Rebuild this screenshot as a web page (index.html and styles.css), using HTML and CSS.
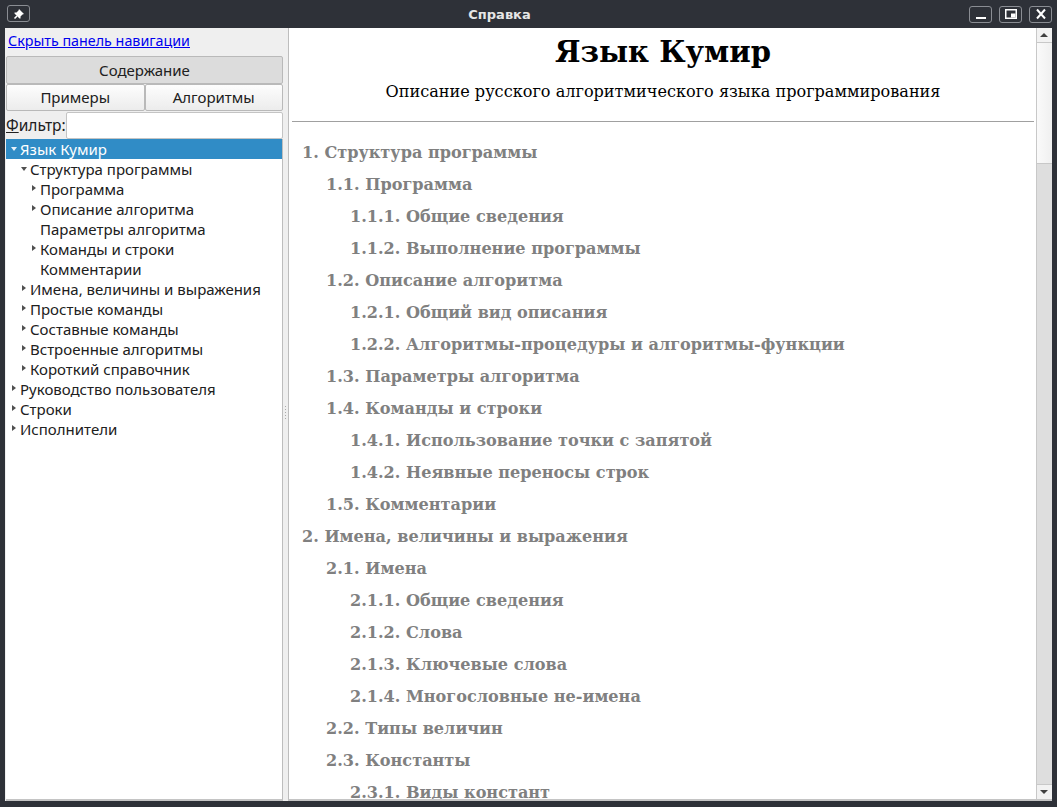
FILE: index.html
```html
<!DOCTYPE html>
<html lang="ru">
<head>
<meta charset="utf-8">
<title>Справка</title>
<link rel="stylesheet" href="styles.css">
</head>
<body>
<div class="window">
  <div class="titlebar">
    <div class="tb-btn pin">
      <svg width="12" height="12" viewBox="0 0 12 12"><path d="M6 1 L11 6 L9.5 6.5 L7.5 8.5 L7.5 10.5 L6.5 10.5 L1.5 5.5 L1.5 4.5 L3.5 4.5 L5.5 2.5 Z" fill="#fff"/><path d="M4 8 L1.5 10.5" stroke="#fff" stroke-width="1.6"/></svg>
    </div>
    <div class="title">Справка</div>
    <div class="tb-right">
      <div class="tb-btn"><svg width="14" height="12" viewBox="0 0 14 12"><rect x="2" y="9" width="10" height="2" fill="#fff"/></svg></div>
      <div class="tb-btn"><svg width="14" height="12" viewBox="0 0 14 12"><rect x="1.75" y="1.75" width="10.5" height="8.5" fill="none" stroke="#fff" stroke-width="1.5"/><rect x="7" y="5.5" width="4.5" height="4" fill="#fff"/></svg></div>
      <div class="tb-btn"><svg width="14" height="12" viewBox="0 0 14 12"><path d="M3 1.5 L11 10.5 M11 1.5 L3 10.5" stroke="#fff" stroke-width="2"/></svg></div>
    </div>
  </div>
  <div class="main">
    <div class="nav">
      <div class="link-row"><a class="hide-link" href="#">Скрыть панель навигации</a></div>
      <div class="btn checked">Содержание</div>
      <div class="btn-row"><div class="btn">Примеры</div><div class="btn">Алгоритмы</div></div>
      <div class="filter"><span class="flabel"><u>Ф</u>ильтр:</span><div class="finput"></div></div>
      <div class="tree">
        <div class="row sel l0"><span class="arr down"></span>Язык Кумир</div>
        <div class="row l1"><span class="arr down"></span>Структура программы</div>
        <div class="row l2"><span class="arr right"></span>Программа</div>
        <div class="row l2"><span class="arr right"></span>Описание алгоритма</div>
        <div class="row l2"><span class="arr none"></span>Параметры алгоритма</div>
        <div class="row l2"><span class="arr right"></span>Команды и строки</div>
        <div class="row l2"><span class="arr none"></span>Комментарии</div>
        <div class="row l1"><span class="arr right"></span>Имена, величины и выражения</div>
        <div class="row l1"><span class="arr right"></span>Простые команды</div>
        <div class="row l1"><span class="arr right"></span>Составные команды</div>
        <div class="row l1"><span class="arr right"></span>Встроенные алгоритмы</div>
        <div class="row l1"><span class="arr right"></span>Короткий справочник</div>
        <div class="row l0"><span class="arr right"></span>Руководство пользователя</div>
        <div class="row l0"><span class="arr right"></span>Строки</div>
        <div class="row l0"><span class="arr right"></span>Исполнители</div>
      </div>
    </div>
    <div class="splitter"><div class="grip"></div></div>
    <div class="content">
      <div class="doc">
        <h1>Язык Кумир</h1>
        <p class="sub">Описание русского алгоритмического языка программирования</p>
        <hr>
        <ul class="toc">
          <li class="t1">1. Структура программы</li>
          <li class="t2">1.1. Программа</li>
          <li class="t3">1.1.1. Общие сведения</li>
          <li class="t3">1.1.2. Выполнение программы</li>
          <li class="t2">1.2. Описание алгоритма</li>
          <li class="t3">1.2.1. Общий вид описания</li>
          <li class="t3">1.2.2. Алгоритмы-процедуры и алгоритмы-функции</li>
          <li class="t2">1.3. Параметры алгоритма</li>
          <li class="t2">1.4. Команды и строки</li>
          <li class="t3">1.4.1. Использование точки с запятой</li>
          <li class="t3">1.4.2. Неявные переносы строк</li>
          <li class="t2">1.5. Комментарии</li>
          <li class="t1">2. Имена, величины и выражения</li>
          <li class="t2">2.1. Имена</li>
          <li class="t3">2.1.1. Общие сведения</li>
          <li class="t3">2.1.2. Слова</li>
          <li class="t3">2.1.3. Ключевые слова</li>
          <li class="t3">2.1.4. Многословные не-имена</li>
          <li class="t2">2.2. Типы величин</li>
          <li class="t2">2.3. Константы</li>
          <li class="t3">2.3.1. Виды констант</li>
        </ul>
      </div>
      <div class="scrollbar">
        <div class="sb-btn"><span class="sb-up"></span></div>
        <div class="sb-handle"></div>
        <div class="sb-track"></div>
        <div class="sb-btn"><span class="sb-down"></span></div>
      </div>
    </div>
  </div>
</div>
</body>
</html>
```
FILE: styles.css
```css
* { box-sizing: border-box; }
html, body { margin: 0; padding: 0; }
body { width: 1057px; height: 807px; overflow: hidden; background: #2e3138; font-family: "Noto Sans", "DejaVu Sans", sans-serif; }
.window { width: 1057px; height: 807px; display: flex; flex-direction: column; background: #2e3138; }
.titlebar { height: 28px; flex: none; display: flex; align-items: center; padding: 0 7px; }
.tb-btn { width: 23px; height: 17px; border: 1px solid #8a8d93; border-radius: 3px; display: flex; align-items: center; justify-content: center; }
.pin { margin-top: -1px; }
.title { flex: 1; text-align: center; color: #e6e6e6; font-family: "DejaVu Sans", sans-serif; font-weight: bold; font-size: 13px; }
.tb-right { display: flex; gap: 7px; margin-right: -2px; }
.main { flex: 1; min-height: 0; display: flex; margin: 0 5px 6px 5px; background: #efefef; }
.nav { width: 278px; display: flex; flex-direction: column; padding-left: 1px; min-height: 0; }
.link-row { height: 28px; line-height: 24px; padding-left: 2px; flex: none; }
.hide-link { color: #0000ee; font-size: 14.3px; text-decoration: underline; }
.btn { height: 27px; border: 1px solid #b9b9b9; border-radius: 2px; background: linear-gradient(#fdfdfd, #ececec); text-align: center; line-height: 25px; font-size: 15px; color: #202020; flex: none; }
.btn.checked { background: #dcdcdc; height: 28px; line-height: 26px; }
.btn-row { display: flex; flex: none; }
.btn-row .btn { flex: 1; }
.filter { height: 28px; display: flex; align-items: center; flex: none; }
.flabel { font-size: 15.5px; color: #202020; width: 60px; }
.finput { flex: 1; height: 27px; background: #fff; border: 1px solid #c4c4c4; border-radius: 2px; margin-top: 1px; }
.tree { flex: 1; min-height: 0; overflow: hidden; background: #fff; border-right: 1px solid #bdbdbd; border-bottom: 2px solid #c4c4c4; }
.row { height: 20px; line-height: 20px; font-size: 15px; color: #202020; display: flex; align-items: center; white-space: nowrap; }
.row.sel { background: #308cc6; color: #fff; }
.l0 { padding-left: 3px; }
.l1 { padding-left: 13px; }
.l2 { padding-left: 23px; }
.arr { width: 11px; height: 20px; position: relative; flex: none; }
.arr.down::after { content: ""; position: absolute; left: 2px; top: 8px; border-left: 3.5px solid transparent; border-right: 3.5px solid transparent; border-top: 4px solid #505050; }
.sel .arr.down::after { border-top-color: #e8f2fa; }
.arr.right::after { content: ""; position: absolute; left: 3px; top: 6px; border-top: 3.5px solid transparent; border-bottom: 3.5px solid transparent; border-left: 4px solid #505050; }
.splitter { width: 5px; position: relative; }
.grip { position: absolute; left: 2px; top: 378px; width: 1px; height: 14px; background: repeating-linear-gradient(#aaa 0 1px, transparent 1px 3px); }
.content { flex: 1; min-height: 0; display: flex; background: #fff; border-left: 1px solid #bdbdbd; border-bottom: 2px solid #c4c4c4; }
.doc { flex: 1; overflow: hidden; padding: 0 2px 0 3px; font-family: "DejaVu Serif", serif; }
h1 { margin: 5px 0 0 0; text-align: center; font-size: 29px; font-weight: bold; color: #000; line-height: 38px; }
.sub { margin: 11px 0 0 0; text-align: center; font-size: 16.1px; line-height: 20px; color: #000; }
hr { margin: 19px 0 0 0; border: 0; border-top: 1px solid #a0a0a0; height: 0; }
.toc { list-style: none; margin: 15px 0 0 0; padding: 0; }
.toc li { font-weight: bold; color: #808080; font-size: 16.1px; line-height: 32px; white-space: nowrap; }
.t1 { padding-left: 10px; }
.t2 { padding-left: 34px; }
.t3 { padding-left: 58px; }
.scrollbar { width: 16px; display: flex; flex-direction: column; border-left: 1px solid #c8c8c8; background: #dcdcdc; }
.sb-btn { height: 15px; flex: none; background: #f2f2f2; position: relative; border-bottom: 1px solid #c8c8c8; }
.sb-btn:last-child { border-bottom: 0; border-top: 1px solid #c8c8c8; }
.sb-up { position: absolute; left: 3px; top: 5px; border-left: 4.5px solid transparent; border-right: 4.5px solid transparent; border-bottom: 4px solid #404040; }
.sb-down { position: absolute; left: 3px; top: 5px; border-left: 4.5px solid transparent; border-right: 4.5px solid transparent; border-top: 4px solid #404040; }
.sb-handle { height: 121px; flex: none; background: linear-gradient(90deg, #fafafa, #f0f0f0); border-bottom: 1px solid #c8c8c8; }
.sb-track { flex: 1; background: #dedede; }
```
